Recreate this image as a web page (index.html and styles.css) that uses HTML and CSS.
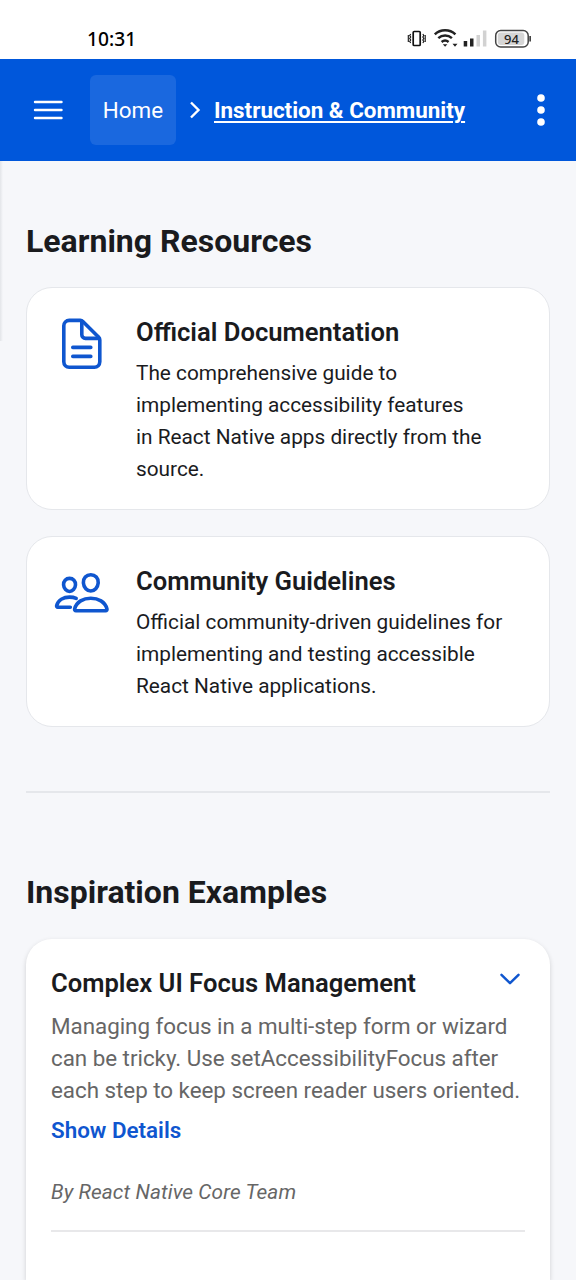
FILE: index.html
```html
<!DOCTYPE html>
<html lang="en">
<head>
<meta charset="utf-8">
<title>Instruction &amp; Community</title>
<link rel="stylesheet" href="styles.css">
</head>
<body>
<div class="status">
  <span class="time">10:31</span>
  <svg class="status-icons" width="126" height="24" viewBox="0 0 126 24">
    <g fill="none" stroke="#111" stroke-width="1.700">
      <rect x="7.200" y="6.500" width="7" height="14" rx="1"/>
      <path d="M4.700 9l-1 1.500 1 1.500-1 1.500 1 1.500-1 1.500 1 1.500M16.800 9l1 1.500-1 1.500 1 1.500-1 1.500 1 1.500-1 1.500M2.300 10v7M19.200 10v7" stroke-width="1.100"/>
    </g>
    <g fill="none" stroke="#222" stroke-width="2.500">
      <path d="M28.800 9.300a15 15 0 0 1 20.600 0M32.300 13.200a10 10 0 0 1 13.600 0M35.600 17a5.500 5.500 0 0 1 7 0"/>
    </g>
    <path d="M36.800 19.200h4.600l-2.300 2.600zM46.500 18.700h5l-2.500 3z" fill="#222"/>
    <path d="M57.700 16h3.500v5.500h-3.500zM64 13.500h3.500v8H64z" fill="#222"/>
    <path d="M70.500 10H74v11.500h-3.500zM76.900 5.500h3.500v16h-3.500z" fill="#d2d2d2"/>
    <rect x="89.700" y="5.500" width="32.500" height="16.400" rx="5" fill="#fff" stroke="#444" stroke-width="1.500"/>
    <rect x="91.800" y="7.500" width="26.500" height="12.400" rx="3" fill="#d6d6d6"/>
    <path d="M123.300 11h1.700v5.500h-1.700z" fill="#444"/>
    <text class="battery" x="105.500" y="18.500" text-anchor="middle">94</text>
  </svg>
</div>
<header class="bar">
  <svg class="menu" width="30" height="20" viewBox="0 0 30 20"><path d="M2 2h26.500M2 10h26.500M2 18h26.500" stroke="#fff" stroke-width="2.400" stroke-linecap="round"/></svg>
  <a class="home">Home</a>
  <svg class="chev" width="12" height="18" viewBox="0 0 12 18"><path d="M2 1.500l7.500 7.500L2 16.500" fill="none" stroke="#fff" stroke-width="2.400"/></svg>
  <a class="crumb">Instruction &amp; Community</a>
  <svg class="more" width="10" height="34" viewBox="0 0 10 34"><g fill="#fff"><circle cx="5" cy="5" r="3.800"/><circle cx="5" cy="17" r="3.800"/><circle cx="5" cy="29" r="3.800"/></g></svg>
</header>
<main class="content">
  <div class="edge"></div>
  <h1 class="heading learn">Learning Resources</h1>
  <section class="card">
    <svg class="icon" viewBox="0 0 512 512">
      <path d="M416 221.250V416a48 48 0 0 1-48 48H144a48 48 0 0 1-48-48V96a48 48 0 0 1 48-48h98.750a32 32 0 0 1 22.620 9.370l141.260 141.260a32 32 0 0 1 9.370 22.620z"/>
      <path d="M256 56v120a32 32 0 0 0 32 32h120M176 288h160M176 368h160"/>
    </svg>
    <div>
      <h2 class="title">Official Documentation</h2>
      <p class="text">The comprehensive guide to<br>implementing accessibility features<br>in React Native apps directly from the<br>source.</p>
    </div>
  </section>
  <section class="card">
    <svg class="icon" viewBox="0 0 512 512">
      <path d="M402 168c-2.930 40.670-33.100 72-66 72s-63.120-31.320-66-72c-3-42.310 26.370-72 66-72s69 30.460 66 72z"/>
      <path d="M336 304c-65.170 0-127.840 32.370-143.540 95.410-2.080 8.340 3.150 16.590 11.720 16.590h263.650c8.570 0 13.770-8.250 11.720-16.590C463.850 335.360 401.180 304 336 304z"/>
      <path d="M200 185.940c-2.340 32.480-26.720 58.060-53 58.060s-50.700-25.570-53-58.060C91.610 152.150 115.340 128 147 128s55.390 24.770 53 57.940z"/>
      <path d="M206 306c-18.050-8.270-37.930-11.450-59-11.450-52 0-102.100 25.850-114.650 76.200-1.650 6.660 2.530 13.250 9.370 13.250H154"/>
    </svg>
    <div>
      <h2 class="title">Community Guidelines</h2>
      <p class="text">Official community-driven guidelines for<br>implementing and testing accessible<br>React Native applications.</p>
    </div>
  </section>
  <hr class="divider">
  <h1 class="heading inspire">Inspiration Examples</h1>
  <section class="example">
    <div class="row">
      <h2 class="title">Complex UI Focus Management</h2>
      <svg class="down" width="20" height="13" viewBox="0 0 20 13"><path d="M1.500 1.800l8.500 8.400 8.500-8.400" fill="none" stroke="#0f56cf" stroke-width="2.500" stroke-linecap="round" stroke-linejoin="round"/></svg>
    </div>
    <p class="desc">Managing focus in a multi-step form or wizard<br>can be tricky. Use setAccessibilityFocus after<br>each step to keep screen reader users oriented.</p>
    <a class="details">Show Details</a>
    <p class="by">By React Native Core Team</p>
    <hr class="thin">
  </section>
</main>
</body>
</html>
```
FILE: styles.css
```css
* { box-sizing: border-box; }
body { margin: 0; width: 576px; height: 1280px; overflow: hidden; background: #f6f7fa; font-family: Roboto, sans-serif; color: #1a1b1e; display: flex; flex-direction: column; }
h1, h2, p, hr { margin: 0; border: 0; }
svg { display: block; flex: none; }
.status { height: 59px; flex: none; background: #fff; display: flex; justify-content: space-between; padding: 26px 44px 0 87px; }
.time { font: 500 19.2px/26px "Noto Sans", sans-serif; color: #000; }
.status-icons { margin-top: -1px; }
.battery { font: 500 13px "Noto Sans", sans-serif; fill: #222; }
.bar { height: 102px; flex: none; background: #0057db; color: #fff; display: flex; align-items: center; padding: 0 30px 0 33px; white-space: nowrap; }
.home { margin-left: 27px; width: 86px; height: 70px; line-height: 70px; border-radius: 6px; background: #1a68df; text-align: center; font-size: 22.4px; }
.chev { margin-left: 13px; }
.crumb { margin-left: 13px; font-size: 22.4px; font-weight: 700; text-decoration: underline; text-decoration-thickness: 1.5px; text-underline-offset: 3px; line-height: 32px; }
.more { margin-left: auto; }
.content { flex: 1; min-height: 0; padding: 0 26px; position: relative; display: flex; flex-direction: column; }
.edge { position: absolute; left: 0; top: 0; width: 3px; height: 180px; background: linear-gradient(90deg, #e3e5e9, #f6f7fa); }
.heading { font-size: 32px; font-weight: 700; line-height: 40px; white-space: nowrap; }
.learn { padding-top: 60px; margin-bottom: 26px; }
.card { flex: none; background: #fff; border: 1.6px solid #e5e7eb; border-radius: 26px; display: flex; gap: 25.4px; padding: 27px 26px 25px; margin-bottom: 26px; white-space: nowrap; height: 223px; }
.card + .card { height: 191px; margin-bottom: 0; }
.icon { width: 57.6px; height: 57.6px; fill: none; stroke: #0f56cf; stroke-width: 32; stroke-linecap: round; stroke-linejoin: round; }
.title { font-size: 25.6px; font-weight: 600; line-height: 36px; white-space: nowrap; }
.card .title { line-height: 35px; }
.text { font-size: 20.8px; line-height: 32px; margin-top: 7px; }
.divider { flex: none; height: 2px; background: #e5e7eb; margin-top: 64px; }
.inspire { margin-top: 79px; margin-bottom: 27px; }
.example { flex: 1; min-height: 0; background: #fff; border-radius: 26px 26px 0 0; padding: 26px 25px 0; box-shadow: 0 2px 5px rgba(0,0,0,.16); white-space: nowrap; }
.row { display: flex; justify-content: space-between; align-items: flex-start; }
.down { margin: 8px 5px 0 0; }
.desc { font-size: 22.4px; line-height: 32px; color: #666; margin-top: 9px; letter-spacing: -.03px; }
.details { display: block; font-size: 22.4px; font-weight: 600; line-height: 32px; color: #0f56cf; margin-top: 8px; }
.by { font-size: 20.8px; font-style: italic; line-height: 28px; color: #666; margin-top: 32px; letter-spacing: .09px; }
.thin { height: 2px; background: #e8e8ea; margin-top: 24px; }
```
